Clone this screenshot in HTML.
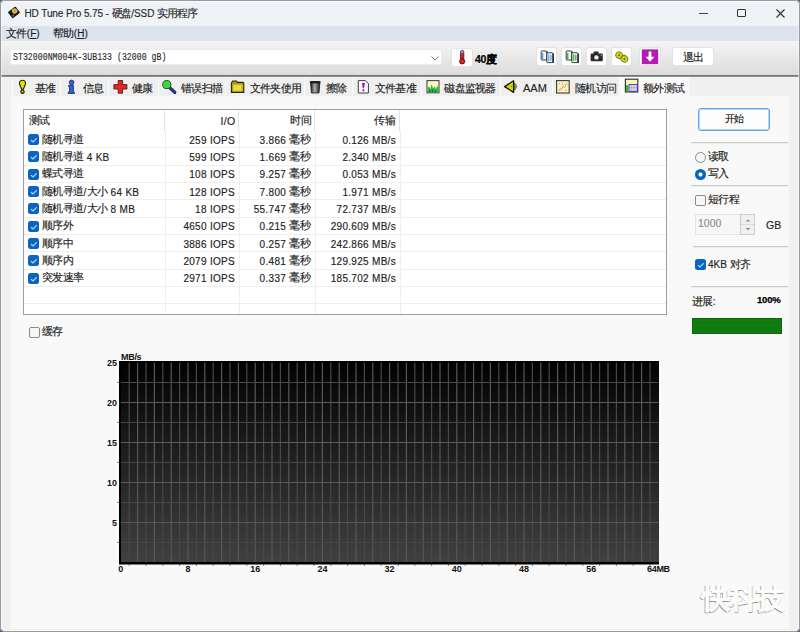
<!DOCTYPE html>
<html><head><meta charset="utf-8">
<style>
*{margin:0;padding:0;box-sizing:border-box}
html,body{width:800px;height:632px;overflow:hidden;background:#5a6270}
body{font-family:"Liberation Sans",sans-serif;font-size:10px;color:#1a1a1a;position:relative;-webkit-text-stroke:0.15px currentColor}
.a{position:absolute;line-height:12px}
.c{font-size:1.05em;letter-spacing:-0.6px}
.nr .c{letter-spacing:-0.8px}
.ttl .c{letter-spacing:-1.1px}
.td .c,.hd .c{line-height:0;position:relative;top:-1px}
svg.a{overflow:visible}
#win{position:absolute;left:0;top:0;width:800px;height:632px;background:#f0f0f0;border-radius:5px;overflow:hidden}
#frame{position:absolute;left:0;top:0;width:800px;height:632px;border:1px solid #9a9a9a;border-radius:5px;pointer-events:none;box-shadow:inset 0 0 0 1px rgba(255,255,255,0.5)}
#title{position:absolute;left:0;top:0;width:800px;height:26px;background:#eff2f6}
#menu{position:absolute;left:0;top:26px;width:800px;height:15.5px;background:#dde4ed}
#tool{position:absolute;left:0;top:41px;width:800px;height:34px;background:linear-gradient(#f4f4f4,#dcdcdc)}
#tline{position:absolute;left:0;top:75px;width:800px;height:2px;background:linear-gradient(#6a6a6a,#9a9a9a)}
.tab{position:absolute;top:78px;height:18px;background:#efefef;border-left:1px solid #fbfbfb}
.tt{position:absolute;top:81.5px;white-space:nowrap;font-size:10px;color:#222}
#page{position:absolute;left:11px;top:96px;width:778px;height:533px;background:#f9f9f9}
.tbtn{position:absolute;height:19px;background:#fff;border:1px solid #e3e3e3;border-radius:3px}
.hd,.td{font-size:10px;color:#222;white-space:nowrap;letter-spacing:0.3px}
.r{text-align:right}
.mono{white-space:nowrap;font-size:10.5px;color:#2a2a2a}
.mono i{font-style:normal;display:inline-block;width:4.94px;text-align:center;overflow:visible}
.cb{width:11px;height:11px;background:#0a64c4;border-radius:2.5px}
.cb svg{position:absolute;left:0.5px;top:0.5px}
.cbx{width:11px;height:11px;border:1px solid #8a8a8a;border-radius:2px;background:#f6f6f6}
.radio{width:11px;height:11px;border:1px solid #8a8a8a;border-radius:50%;background:#f6f6f6}
.radio.on{border:none;background:radial-gradient(circle at 50% 50%,#fff 0,#fff 1.7px,#0067c0 2.4px)}
.lbl{font-size:10px;color:#222;white-space:nowrap}
.sep{height:2px;background:linear-gradient(#cccccc 50%,#ececec 50%)}
.btn{background:#fdfdfd;border:1px solid #5ea6e8;border-radius:3px;box-shadow:inset 0 0 0 1px #b4d6f4}
.btn span{font-size:10px}
.yl{font-size:9px;font-weight:bold;text-align:right;color:#111;-webkit-text-stroke:0}
.xl{font-size:9px;font-weight:bold;color:#111;white-space:nowrap;-webkit-text-stroke:0}
</style></head><body>
<div id="win">
<div id="title">
<div class="a ttl" style="left:24.5px;top:7px;font-size:10px;letter-spacing:-0.1px;color:#2a2a2a;white-space:nowrap">HD Tune Pro 5.75 - <span class="c">硬盘</span>/SSD <span class="c">实用程序</span></div>
<div class="a" style="left:699px;top:13px;width:9px;height:1px;background:#444"></div>
<div class="a" style="left:737px;top:9px;width:9px;height:8px;border:1px solid #333;border-radius:1px"></div>
<svg class="a" style="left:776px;top:9px" width="9" height="9" viewBox="0 0 9 9"><path d="M0.5 0.5L8.5 8.5M8.5 0.5L0.5 8.5" stroke="#333" stroke-width="1.2"/></svg>
</div>
<div id="menu">
<div class="a" style="left:6px;top:1px;font-size:10px;white-space:nowrap"><span class="c">文件</span>(<u>F</u>)</div>
<div class="a" style="left:53px;top:1px;font-size:10px;white-space:nowrap"><span class="c">帮助</span>(<u>H</u>)</div>
</div>
<div id="tool"></div>
<div class="a" style="left:10px;top:49px;width:432px;height:16px;background:#fff;border:1px solid #ececec;border-radius:2px">
  <div class="a" style="left:2px;top:1px;font-family:'Liberation Mono',monospace;font-size:11px;color:#2a2a2a;white-space:nowrap;transform:scaleX(0.75);transform-origin:0 0">ST32000NM004K-3UB133 (32000 gB)</div>
  <svg class="a" style="left:420px;top:6px" width="8" height="5" viewBox="0 0 8 5"><path d="M0.5 0.5L4 4L7.5 0.5" stroke="#777" fill="none"/></svg>
</div>
<div class="tbtn" style="left:451px;top:48px;width:22px;height:19px"></div>
<div class="a" style="left:475px;top:52.5px;font-size:10.5px;font-weight:bold;color:#000;white-space:nowrap;letter-spacing:-0.3px;-webkit-text-stroke:0.2px #000">40<span class="c">度</span></div>
<div class="tbtn" style="left:536px;top:47px;width:21px;height:19px"></div>
<div class="tbtn" style="left:561px;top:47px;width:21px;height:19px"></div>
<div class="tbtn" style="left:586px;top:47px;width:21px;height:19px"></div>
<div class="tbtn" style="left:611px;top:47px;width:21px;height:19px"></div>
<div class="tbtn" style="left:639px;top:47px;width:22px;height:19px"></div>
<div class="tbtn" style="left:672px;top:47px;width:42px;height:19px"><span class="a" style="left:10px;top:3px;font-size:10px"><span class="c">退出</span></span></div>
<div id="tline"></div>
<div class="tab" style="left:12px;width:48px"></div>
<div class="tab" style="left:60px;width:48px"></div>
<div class="tab" style="left:108px;width:50px"></div>
<div class="tab" style="left:158px;width:67px"></div>
<div class="tab" style="left:225px;width:79px"></div>
<div class="tab" style="left:304px;width:48px"></div>
<div class="tab" style="left:352px;width:69px"></div>
<div class="tab" style="left:421px;width:79px"></div>
<div class="tab" style="left:500px;width:52px"></div>
<div class="tab" style="left:552px;width:67px"></div>
<div id="page"></div>
<div class="tab" style="left:619px;top:77px;width:70px;height:19px;background:#f9f9f9;border-left:none"></div>
<div class="tt" style="left:34.5px"><span class="c">基准</span></div>
<div class="tt" style="left:82.5px"><span class="c">信息</span></div>
<div class="tt" style="left:132px"><span class="c">健康</span></div>
<div class="tt" style="left:181px"><span class="c">错误扫描</span></div>
<div class="tt nr" style="left:250px"><span class="c">文件夹使用</span></div>
<div class="tt" style="left:326px"><span class="c">擦除</span></div>
<div class="tt" style="left:374.6px"><span class="c">文件基准</span></div>
<div class="tt nr" style="left:444.4px"><span class="c">磁盘监视器</span></div>
<div class="tt" style="left:523px"><span style="font-size:11px">AAM</span></div>
<div class="tt" style="left:575px"><span class="c">随机访问</span></div>
<div class="tt" style="left:643px"><span class="c">额外测试</span></div>
<div class="a" style="left:23px;top:109px;width:644px;height:206px;background:#fff;border:1px solid #9a9fa8"></div>
<div class="a" style="left:164px;top:110px;width:1px;height:21px;background:#e2e2e2"></div>
<div class="a" style="left:165px;top:131px;width:1px;height:183px;background:#eeeeee"></div>
<div class="a" style="left:238px;top:110px;width:1px;height:21px;background:#e2e2e2"></div>
<div class="a" style="left:239px;top:131px;width:1px;height:183px;background:#eeeeee"></div>
<div class="a" style="left:314px;top:110px;width:1px;height:21px;background:#e2e2e2"></div>
<div class="a" style="left:315px;top:131px;width:1px;height:183px;background:#eeeeee"></div>
<div class="a" style="left:399px;top:110px;width:1px;height:21px;background:#e2e2e2"></div>
<div class="a" style="left:400px;top:131px;width:1px;height:183px;background:#eeeeee"></div>
<div class="a" style="left:24px;top:147px;width:642px;height:1px;background:#efefef"></div>
<div class="a" style="left:24px;top:165px;width:642px;height:1px;background:#efefef"></div>
<div class="a" style="left:24px;top:182px;width:642px;height:1px;background:#efefef"></div>
<div class="a" style="left:24px;top:199px;width:642px;height:1px;background:#efefef"></div>
<div class="a" style="left:24px;top:217px;width:642px;height:1px;background:#efefef"></div>
<div class="a" style="left:24px;top:234px;width:642px;height:1px;background:#efefef"></div>
<div class="a" style="left:24px;top:251px;width:642px;height:1px;background:#efefef"></div>
<div class="a" style="left:24px;top:269px;width:642px;height:1px;background:#efefef"></div>
<div class="a" style="left:24px;top:286px;width:642px;height:1px;background:#efefef"></div>
<div class="a" style="left:24px;top:303px;width:642px;height:1px;background:#efefef"></div>
<div class="a hd" style="left:29px;top:116px"><span class="c">测试</span></div>
<div class="a hd r" style="left:166.5px;top:115px;width:69px;font-size:10.5px">I/O</div>
<div class="a hd r" style="left:241px;top:116px;width:70px"><span class="c">时间</span></div>
<div class="a hd r" style="left:316px;top:116px;width:79px"><span class="c">传输</span></div>
<div class="a cb" style="left:28px;top:134px"><svg width="10" height="10" viewBox="0 0 10 10"><path d="M2.4 5.5L4 6.9L7.4 3.6" stroke="#b8d4f4" stroke-width="1.2" fill="none" stroke-linecap="round"/></svg></div>
<div class="a td" style="left:42px;top:134.50px"><span class="c">随机寻道</span></div>
<div class="a td r" style="left:166px;top:134.50px;width:69px">259 IOPS</div>
<div class="a td r" style="left:240px;top:134.50px;width:70px">3.866 <span class="c">毫秒</span></div>
<div class="a td r" style="left:317px;top:134.50px;width:79px">0.126 MB/s</div>
<div class="a cb" style="left:28px;top:151px"><svg width="10" height="10" viewBox="0 0 10 10"><path d="M2.4 5.5L4 6.9L7.4 3.6" stroke="#b8d4f4" stroke-width="1.2" fill="none" stroke-linecap="round"/></svg></div>
<div class="a td" style="left:42px;top:151.85px"><span class="c">随机寻道</span> 4 KB</div>
<div class="a td r" style="left:166px;top:151.85px;width:69px">599 IOPS</div>
<div class="a td r" style="left:240px;top:151.85px;width:70px">1.669 <span class="c">毫秒</span></div>
<div class="a td r" style="left:317px;top:151.85px;width:79px">2.340 MB/s</div>
<div class="a cb" style="left:28px;top:169px"><svg width="10" height="10" viewBox="0 0 10 10"><path d="M2.4 5.5L4 6.9L7.4 3.6" stroke="#b8d4f4" stroke-width="1.2" fill="none" stroke-linecap="round"/></svg></div>
<div class="a td" style="left:42px;top:169.20px"><span class="c">蝶式寻道</span></div>
<div class="a td r" style="left:166px;top:169.20px;width:69px">108 IOPS</div>
<div class="a td r" style="left:240px;top:169.20px;width:70px">9.257 <span class="c">毫秒</span></div>
<div class="a td r" style="left:317px;top:169.20px;width:79px">0.053 MB/s</div>
<div class="a cb" style="left:28px;top:186px"><svg width="10" height="10" viewBox="0 0 10 10"><path d="M2.4 5.5L4 6.9L7.4 3.6" stroke="#b8d4f4" stroke-width="1.2" fill="none" stroke-linecap="round"/></svg></div>
<div class="a td" style="left:42px;top:186.55px"><span class="c">随机寻道</span>/<span class="c">大小</span> 64 KB</div>
<div class="a td r" style="left:166px;top:186.55px;width:69px">128 IOPS</div>
<div class="a td r" style="left:240px;top:186.55px;width:70px">7.800 <span class="c">毫秒</span></div>
<div class="a td r" style="left:317px;top:186.55px;width:79px">1.971 MB/s</div>
<div class="a cb" style="left:28px;top:203px"><svg width="10" height="10" viewBox="0 0 10 10"><path d="M2.4 5.5L4 6.9L7.4 3.6" stroke="#b8d4f4" stroke-width="1.2" fill="none" stroke-linecap="round"/></svg></div>
<div class="a td" style="left:42px;top:203.90px"><span class="c">随机寻道</span>/<span class="c">大小</span> 8 MB</div>
<div class="a td r" style="left:166px;top:203.90px;width:69px">18 IOPS</div>
<div class="a td r" style="left:240px;top:203.90px;width:70px">55.747 <span class="c">毫秒</span></div>
<div class="a td r" style="left:317px;top:203.90px;width:79px">72.737 MB/s</div>
<div class="a cb" style="left:28px;top:221px"><svg width="10" height="10" viewBox="0 0 10 10"><path d="M2.4 5.5L4 6.9L7.4 3.6" stroke="#b8d4f4" stroke-width="1.2" fill="none" stroke-linecap="round"/></svg></div>
<div class="a td" style="left:42px;top:221.25px"><span class="c">顺序外</span></div>
<div class="a td r" style="left:166px;top:221.25px;width:69px">4650 IOPS</div>
<div class="a td r" style="left:240px;top:221.25px;width:70px">0.215 <span class="c">毫秒</span></div>
<div class="a td r" style="left:317px;top:221.25px;width:79px">290.609 MB/s</div>
<div class="a cb" style="left:28px;top:238px"><svg width="10" height="10" viewBox="0 0 10 10"><path d="M2.4 5.5L4 6.9L7.4 3.6" stroke="#b8d4f4" stroke-width="1.2" fill="none" stroke-linecap="round"/></svg></div>
<div class="a td" style="left:42px;top:238.60px"><span class="c">顺序中</span></div>
<div class="a td r" style="left:166px;top:238.60px;width:69px">3886 IOPS</div>
<div class="a td r" style="left:240px;top:238.60px;width:70px">0.257 <span class="c">毫秒</span></div>
<div class="a td r" style="left:317px;top:238.60px;width:79px">242.866 MB/s</div>
<div class="a cb" style="left:28px;top:255px"><svg width="10" height="10" viewBox="0 0 10 10"><path d="M2.4 5.5L4 6.9L7.4 3.6" stroke="#b8d4f4" stroke-width="1.2" fill="none" stroke-linecap="round"/></svg></div>
<div class="a td" style="left:42px;top:255.95px"><span class="c">顺序内</span></div>
<div class="a td r" style="left:166px;top:255.95px;width:69px">2079 IOPS</div>
<div class="a td r" style="left:240px;top:255.95px;width:70px">0.481 <span class="c">毫秒</span></div>
<div class="a td r" style="left:317px;top:255.95px;width:79px">129.925 MB/s</div>
<div class="a cb" style="left:28px;top:273px"><svg width="10" height="10" viewBox="0 0 10 10"><path d="M2.4 5.5L4 6.9L7.4 3.6" stroke="#b8d4f4" stroke-width="1.2" fill="none" stroke-linecap="round"/></svg></div>
<div class="a td" style="left:42px;top:273.30px"><span class="c">突发速率</span></div>
<div class="a td r" style="left:166px;top:273.30px;width:69px">2971 IOPS</div>
<div class="a td r" style="left:240px;top:273.30px;width:70px">0.337 <span class="c">毫秒</span></div>
<div class="a td r" style="left:317px;top:273.30px;width:79px">185.702 MB/s</div>
<div class="a" style="left:119px;top:361px;width:540px;height:203px;background:linear-gradient(#000 0px,#020202 2px,#404040 201px,#000 201px)"></div>
<svg class="a" style="left:0;top:0" width="800" height="632" viewBox="0 0 800 632">
<line x1="129.20" y1="362" x2="129.20" y2="562" stroke="#484848" stroke-width="1.2"/>
<line x1="129.20" y1="564" x2="129.20" y2="566" stroke="#8a8a8a" stroke-width="1"/>
<line x1="137.60" y1="362" x2="137.60" y2="562" stroke="#585858" stroke-width="1.2"/>
<line x1="146.00" y1="362" x2="146.00" y2="562" stroke="#484848" stroke-width="1.2"/>
<line x1="146.00" y1="564" x2="146.00" y2="566" stroke="#8a8a8a" stroke-width="1"/>
<line x1="154.40" y1="362" x2="154.40" y2="562" stroke="#585858" stroke-width="1.2"/>
<line x1="162.80" y1="362" x2="162.80" y2="562" stroke="#484848" stroke-width="1.2"/>
<line x1="162.80" y1="564" x2="162.80" y2="566" stroke="#8a8a8a" stroke-width="1"/>
<line x1="171.20" y1="362" x2="171.20" y2="562" stroke="#585858" stroke-width="1.2"/>
<line x1="179.60" y1="362" x2="179.60" y2="562" stroke="#484848" stroke-width="1.2"/>
<line x1="179.60" y1="564" x2="179.60" y2="566" stroke="#8a8a8a" stroke-width="1"/>
<line x1="188.00" y1="362" x2="188.00" y2="562" stroke="#585858" stroke-width="1.2"/>
<line x1="196.40" y1="362" x2="196.40" y2="562" stroke="#484848" stroke-width="1.2"/>
<line x1="196.40" y1="564" x2="196.40" y2="566" stroke="#8a8a8a" stroke-width="1"/>
<line x1="204.80" y1="362" x2="204.80" y2="562" stroke="#585858" stroke-width="1.2"/>
<line x1="213.20" y1="362" x2="213.20" y2="562" stroke="#484848" stroke-width="1.2"/>
<line x1="213.20" y1="564" x2="213.20" y2="566" stroke="#8a8a8a" stroke-width="1"/>
<line x1="221.60" y1="362" x2="221.60" y2="562" stroke="#585858" stroke-width="1.2"/>
<line x1="230.00" y1="362" x2="230.00" y2="562" stroke="#484848" stroke-width="1.2"/>
<line x1="230.00" y1="564" x2="230.00" y2="566" stroke="#8a8a8a" stroke-width="1"/>
<line x1="238.40" y1="362" x2="238.40" y2="562" stroke="#585858" stroke-width="1.2"/>
<line x1="246.80" y1="362" x2="246.80" y2="562" stroke="#484848" stroke-width="1.2"/>
<line x1="246.80" y1="564" x2="246.80" y2="566" stroke="#8a8a8a" stroke-width="1"/>
<line x1="255.20" y1="362" x2="255.20" y2="562" stroke="#585858" stroke-width="1.2"/>
<line x1="263.60" y1="362" x2="263.60" y2="562" stroke="#484848" stroke-width="1.2"/>
<line x1="263.60" y1="564" x2="263.60" y2="566" stroke="#8a8a8a" stroke-width="1"/>
<line x1="272.00" y1="362" x2="272.00" y2="562" stroke="#585858" stroke-width="1.2"/>
<line x1="280.40" y1="362" x2="280.40" y2="562" stroke="#484848" stroke-width="1.2"/>
<line x1="280.40" y1="564" x2="280.40" y2="566" stroke="#8a8a8a" stroke-width="1"/>
<line x1="288.80" y1="362" x2="288.80" y2="562" stroke="#585858" stroke-width="1.2"/>
<line x1="297.20" y1="362" x2="297.20" y2="562" stroke="#484848" stroke-width="1.2"/>
<line x1="297.20" y1="564" x2="297.20" y2="566" stroke="#8a8a8a" stroke-width="1"/>
<line x1="305.60" y1="362" x2="305.60" y2="562" stroke="#585858" stroke-width="1.2"/>
<line x1="314.00" y1="362" x2="314.00" y2="562" stroke="#484848" stroke-width="1.2"/>
<line x1="314.00" y1="564" x2="314.00" y2="566" stroke="#8a8a8a" stroke-width="1"/>
<line x1="322.40" y1="362" x2="322.40" y2="562" stroke="#585858" stroke-width="1.2"/>
<line x1="330.80" y1="362" x2="330.80" y2="562" stroke="#484848" stroke-width="1.2"/>
<line x1="330.80" y1="564" x2="330.80" y2="566" stroke="#8a8a8a" stroke-width="1"/>
<line x1="339.20" y1="362" x2="339.20" y2="562" stroke="#585858" stroke-width="1.2"/>
<line x1="347.60" y1="362" x2="347.60" y2="562" stroke="#484848" stroke-width="1.2"/>
<line x1="347.60" y1="564" x2="347.60" y2="566" stroke="#8a8a8a" stroke-width="1"/>
<line x1="356.00" y1="362" x2="356.00" y2="562" stroke="#585858" stroke-width="1.2"/>
<line x1="364.40" y1="362" x2="364.40" y2="562" stroke="#484848" stroke-width="1.2"/>
<line x1="364.40" y1="564" x2="364.40" y2="566" stroke="#8a8a8a" stroke-width="1"/>
<line x1="372.80" y1="362" x2="372.80" y2="562" stroke="#585858" stroke-width="1.2"/>
<line x1="381.20" y1="362" x2="381.20" y2="562" stroke="#484848" stroke-width="1.2"/>
<line x1="381.20" y1="564" x2="381.20" y2="566" stroke="#8a8a8a" stroke-width="1"/>
<line x1="389.60" y1="362" x2="389.60" y2="562" stroke="#585858" stroke-width="1.2"/>
<line x1="398.00" y1="362" x2="398.00" y2="562" stroke="#484848" stroke-width="1.2"/>
<line x1="398.00" y1="564" x2="398.00" y2="566" stroke="#8a8a8a" stroke-width="1"/>
<line x1="406.40" y1="362" x2="406.40" y2="562" stroke="#585858" stroke-width="1.2"/>
<line x1="414.80" y1="362" x2="414.80" y2="562" stroke="#484848" stroke-width="1.2"/>
<line x1="414.80" y1="564" x2="414.80" y2="566" stroke="#8a8a8a" stroke-width="1"/>
<line x1="423.20" y1="362" x2="423.20" y2="562" stroke="#585858" stroke-width="1.2"/>
<line x1="431.60" y1="362" x2="431.60" y2="562" stroke="#484848" stroke-width="1.2"/>
<line x1="431.60" y1="564" x2="431.60" y2="566" stroke="#8a8a8a" stroke-width="1"/>
<line x1="440.00" y1="362" x2="440.00" y2="562" stroke="#585858" stroke-width="1.2"/>
<line x1="448.40" y1="362" x2="448.40" y2="562" stroke="#484848" stroke-width="1.2"/>
<line x1="448.40" y1="564" x2="448.40" y2="566" stroke="#8a8a8a" stroke-width="1"/>
<line x1="456.80" y1="362" x2="456.80" y2="562" stroke="#585858" stroke-width="1.2"/>
<line x1="465.20" y1="362" x2="465.20" y2="562" stroke="#484848" stroke-width="1.2"/>
<line x1="465.20" y1="564" x2="465.20" y2="566" stroke="#8a8a8a" stroke-width="1"/>
<line x1="473.60" y1="362" x2="473.60" y2="562" stroke="#585858" stroke-width="1.2"/>
<line x1="482.00" y1="362" x2="482.00" y2="562" stroke="#484848" stroke-width="1.2"/>
<line x1="482.00" y1="564" x2="482.00" y2="566" stroke="#8a8a8a" stroke-width="1"/>
<line x1="490.40" y1="362" x2="490.40" y2="562" stroke="#585858" stroke-width="1.2"/>
<line x1="498.80" y1="362" x2="498.80" y2="562" stroke="#484848" stroke-width="1.2"/>
<line x1="498.80" y1="564" x2="498.80" y2="566" stroke="#8a8a8a" stroke-width="1"/>
<line x1="507.20" y1="362" x2="507.20" y2="562" stroke="#585858" stroke-width="1.2"/>
<line x1="515.60" y1="362" x2="515.60" y2="562" stroke="#484848" stroke-width="1.2"/>
<line x1="515.60" y1="564" x2="515.60" y2="566" stroke="#8a8a8a" stroke-width="1"/>
<line x1="524.00" y1="362" x2="524.00" y2="562" stroke="#585858" stroke-width="1.2"/>
<line x1="532.40" y1="362" x2="532.40" y2="562" stroke="#484848" stroke-width="1.2"/>
<line x1="532.40" y1="564" x2="532.40" y2="566" stroke="#8a8a8a" stroke-width="1"/>
<line x1="540.80" y1="362" x2="540.80" y2="562" stroke="#585858" stroke-width="1.2"/>
<line x1="549.20" y1="362" x2="549.20" y2="562" stroke="#484848" stroke-width="1.2"/>
<line x1="549.20" y1="564" x2="549.20" y2="566" stroke="#8a8a8a" stroke-width="1"/>
<line x1="557.60" y1="362" x2="557.60" y2="562" stroke="#585858" stroke-width="1.2"/>
<line x1="566.00" y1="362" x2="566.00" y2="562" stroke="#484848" stroke-width="1.2"/>
<line x1="566.00" y1="564" x2="566.00" y2="566" stroke="#8a8a8a" stroke-width="1"/>
<line x1="574.40" y1="362" x2="574.40" y2="562" stroke="#585858" stroke-width="1.2"/>
<line x1="582.80" y1="362" x2="582.80" y2="562" stroke="#484848" stroke-width="1.2"/>
<line x1="582.80" y1="564" x2="582.80" y2="566" stroke="#8a8a8a" stroke-width="1"/>
<line x1="591.20" y1="362" x2="591.20" y2="562" stroke="#585858" stroke-width="1.2"/>
<line x1="599.60" y1="362" x2="599.60" y2="562" stroke="#484848" stroke-width="1.2"/>
<line x1="599.60" y1="564" x2="599.60" y2="566" stroke="#8a8a8a" stroke-width="1"/>
<line x1="608.00" y1="362" x2="608.00" y2="562" stroke="#585858" stroke-width="1.2"/>
<line x1="616.40" y1="362" x2="616.40" y2="562" stroke="#484848" stroke-width="1.2"/>
<line x1="616.40" y1="564" x2="616.40" y2="566" stroke="#8a8a8a" stroke-width="1"/>
<line x1="624.80" y1="362" x2="624.80" y2="562" stroke="#585858" stroke-width="1.2"/>
<line x1="633.20" y1="362" x2="633.20" y2="562" stroke="#484848" stroke-width="1.2"/>
<line x1="633.20" y1="564" x2="633.20" y2="566" stroke="#8a8a8a" stroke-width="1"/>
<line x1="641.60" y1="362" x2="641.60" y2="562" stroke="#585858" stroke-width="1.2"/>
<line x1="650.00" y1="362" x2="650.00" y2="562" stroke="#484848" stroke-width="1.2"/>
<line x1="650.00" y1="564" x2="650.00" y2="566" stroke="#8a8a8a" stroke-width="1"/>
<line x1="121" y1="382.50" x2="658.5" y2="382.50" stroke="#464646" stroke-width="1.2"/>
<line x1="117" y1="382.50" x2="119" y2="382.50" stroke="#8a8a8a" stroke-width="1"/>
<line x1="121" y1="402.50" x2="658.5" y2="402.50" stroke="#5a5a5a" stroke-width="1.2"/>
<line x1="121" y1="422.50" x2="658.5" y2="422.50" stroke="#464646" stroke-width="1.2"/>
<line x1="117" y1="422.50" x2="119" y2="422.50" stroke="#8a8a8a" stroke-width="1"/>
<line x1="121" y1="442.50" x2="658.5" y2="442.50" stroke="#5a5a5a" stroke-width="1.2"/>
<line x1="121" y1="462.50" x2="658.5" y2="462.50" stroke="#464646" stroke-width="1.2"/>
<line x1="117" y1="462.50" x2="119" y2="462.50" stroke="#8a8a8a" stroke-width="1"/>
<line x1="121" y1="482.50" x2="658.5" y2="482.50" stroke="#5a5a5a" stroke-width="1.2"/>
<line x1="121" y1="502.50" x2="658.5" y2="502.50" stroke="#464646" stroke-width="1.2"/>
<line x1="117" y1="502.50" x2="119" y2="502.50" stroke="#8a8a8a" stroke-width="1"/>
<line x1="121" y1="522.50" x2="658.5" y2="522.50" stroke="#5a5a5a" stroke-width="1.2"/>
<line x1="121" y1="542.50" x2="658.5" y2="542.50" stroke="#464646" stroke-width="1.2"/>
<line x1="117" y1="542.50" x2="119" y2="542.50" stroke="#8a8a8a" stroke-width="1"/>
<rect x="119" y="361" width="540" height="1.6" fill="#000"/>
<rect x="119" y="361" width="2" height="203" fill="#000"/>
<rect x="119" y="563" width="540" height="1.5" fill="#000"/>
</svg>
<div class="a yl" style="left:80px;top:356.5px;width:37px">25</div>
<div class="a yl" style="left:80px;top:396.5px;width:37px">20</div>
<div class="a yl" style="left:80px;top:436.5px;width:37px">15</div>
<div class="a yl" style="left:80px;top:476.5px;width:37px">10</div>
<div class="a yl" style="left:80px;top:516.5px;width:37px">5</div>
<div class="a xl" style="left:121px;top:351px;letter-spacing:-0.3px">MB/s</div>
<div class="a xl" style="left:105.8px;top:563px;width:30px;text-align:center">0</div>
<div class="a xl" style="left:173.0px;top:563px;width:30px;text-align:center">8</div>
<div class="a xl" style="left:240.2px;top:563px;width:30px;text-align:center">16</div>
<div class="a xl" style="left:307.4px;top:563px;width:30px;text-align:center">24</div>
<div class="a xl" style="left:374.6px;top:563px;width:30px;text-align:center">32</div>
<div class="a xl" style="left:441.8px;top:563px;width:30px;text-align:center">40</div>
<div class="a xl" style="left:509.0px;top:563px;width:30px;text-align:center">48</div>
<div class="a xl" style="left:576.2px;top:563px;width:30px;text-align:center">56</div>
<div class="a xl" style="left:643.4px;top:563px;width:30px;text-align:center;letter-spacing:-0.3px">64MB</div>

<div class="a btn" style="left:698px;top:108px;width:72px;height:23px"><span class="a" style="left:0;top:3.5px;width:70px;text-align:center;color:#111"><span class="c">开始</span></span></div>
<div class="a sep" style="left:691px;top:142px;width:97px"></div>
<div class="a radio" style="left:695px;top:152px"></div><div class="a lbl" style="left:708px;top:150px"><span class="c">读取</span></div>
<div class="a radio on" style="left:695px;top:169px"></div><div class="a lbl" style="left:708px;top:167px"><span class="c">写入</span></div>
<div class="a sep" style="left:691px;top:185px;width:97px"></div>
<div class="a cbx" style="left:695px;top:195px"></div><div class="a lbl" style="left:708px;top:193px"><span class="c">短行程</span></div>
<div class="a" style="left:695px;top:214px;width:60px;height:21px;border:1px solid #e4e4e4;background:#f7f7f7"></div>
<div class="a" style="left:698px;top:217px;color:#8e8e8e;font-size:10.5px">1000</div>
<div class="a" style="left:740px;top:214px;width:15px;height:21px;border:1px solid #cdcdcd;background:#f0f0f0"></div>
<div class="a" style="left:741px;top:224px;width:13px;height:1px;background:#dcdcdc"></div>
<svg class="a" style="left:745px;top:219px" width="6" height="12" viewBox="0 0 6 12"><path d="M0.5 2.6L3 0.4L5.5 2.6Z" fill="#8a8a8a"/><path d="M0.5 9L3 11.2L5.5 9Z" fill="#8a8a8a"/></svg>
<div class="a lbl" style="left:766px;top:219px;font-size:10.5px">GB</div>
<div class="a sep" style="left:693px;top:246px;width:95px"></div>
<div class="a cb" style="left:695px;top:259px"><svg width="10" height="10" viewBox="0 0 10 10"><path d="M2.4 5.5L4 6.9L7.4 3.6" stroke="#b8d4f4" stroke-width="1.2" fill="none" stroke-linecap="round"/></svg></div><div class="a lbl" style="left:708px;top:258px">4KB <span class="c">对齐</span></div>
<div class="a sep" style="left:691px;top:286px;width:97px"></div>
<div class="a lbl" style="left:692px;top:295px"><span class="c">进展</span>:</div>
<div class="a lbl" style="left:757px;top:294px;font-weight:bold;font-size:9.5px;color:#000;letter-spacing:-0.2px;-webkit-text-stroke:0.25px #000">100%</div>
<div class="a" style="left:692px;top:318px;width:90px;height:16px;background:#107c10;border:1px solid #0c6a0c"></div>
<div class="a" style="left:694px;top:325px;width:86px;height:0;border-top:1px dotted #1c841c"></div>
<div class="a cbx" style="left:29px;top:327px"></div><div class="a lbl" style="left:42px;top:325px"><span class="c">缓存</span></div>
<div class="a" style="left:702px;top:580px;line-height:normal;font-size:26.67px;color:#fdfdfd;-webkit-text-stroke:0.4px #fcfcfc;text-shadow:-0.8px 1px 0.5px #8c8c8c,0.5px 0.5px 0.8px #b8b8b8;font-weight:bold;white-space:nowrap"><span class="c">快科技</span></div>


<svg class="a" style="left:0;top:0" width="800" height="632" viewBox="0 0 800 632">
<!-- title icon -->
<g transform="translate(14,12.4) rotate(-38)">
  <rect x="-4.8" y="-3.9" width="9.6" height="7.8" rx="0.8" fill="#161616"/>
  <circle cx="1.4" cy="-0.7" r="2.7" fill="#e6b43c"/>
  <circle cx="1.4" cy="-0.7" r="0.9" fill="#9090a8"/>
  <circle cx="-2.6" cy="2" r="1.1" fill="#6a6a6a"/>
</g>
<!-- tab1 ! -->
<path d="M22.5 80.3 C25.6 80.3 25.9 83 25.3 84.6 L23.3 89.2 L21.7 89.2 L19.7 84.6 C19.1 83 19.4 80.3 22.5 80.3Z" fill="#e2e000" stroke="#1a1a08" stroke-width="1.1"/>
<circle cx="22.5" cy="91.7" r="1.7" fill="#c8c000" stroke="#1a1a08" stroke-width="1.1"/>
<!-- tab2 i -->
<circle cx="71.6" cy="82.4" r="2.3" fill="#2a6ae0" stroke="#1a2a60" stroke-width="0.8"/>
<path d="M68.6 85.4 L73.4 85.4 L73.4 91.6 L74.4 92.2 L74.4 93.4 L68.2 93.4 L68.2 92.2 L69.6 91.6 L69.6 87 L68.6 86.6Z" fill="#2a6ae0" stroke="#101850" stroke-width="0.8"/>
<!-- tab3 red cross -->
<path d="M118.2 80.5 L122.6 80.5 L122.6 84.6 L126.9 84.6 L126.9 89 L122.6 89 L122.6 93.2 L118.2 93.2 L118.2 89 L113.9 89 L113.9 84.6 L118.2 84.6Z" fill="#e32626" stroke="#5a1a1a" stroke-width="0.9"/>
<!-- tab4 magnifier -->
<line x1="169.6" y1="87.6" x2="174.8" y2="92.4" stroke="#101040" stroke-width="3.2" stroke-linecap="round"/>
<line x1="169.6" y1="87.6" x2="174.8" y2="92.4" stroke="#2a3ab0" stroke-width="1.8" stroke-linecap="round"/>
<circle cx="166.8" cy="84.6" r="4.1" fill="#3ad83a" stroke="#1a4a1a" stroke-width="0.9"/>
<!-- tab5 folder -->
<path d="M231.4 83 L232.6 81 L236.4 81 L237.6 82.4 L243.2 82.4 L243.8 83.4 L243.8 92.4 L231.4 92.4Z" fill="#a89818" stroke="#2a2408" stroke-width="1.1"/>
<rect x="232.8" y="84.4" width="9.8" height="7" fill="#d8c828"/>
<rect x="234" y="85.4" width="7" height="5" fill="#e8dc50"/>
<!-- tab6 trash -->
<defs><linearGradient id="tg" x1="0" x2="1"><stop offset="0" stop-color="#1a1a1a"/><stop offset="0.45" stop-color="#b0b0b0"/><stop offset="1" stop-color="#1a1a1a"/></linearGradient></defs>
<rect x="309.8" y="81" width="10.8" height="2.4" rx="1" fill="#222"/>
<path d="M310.6 83 L319.8 83 L319 93 L311.4 93Z" fill="url(#tg)" stroke="#1a1a1a" stroke-width="0.8"/>
<!-- tab7 file bench -->
<path d="M358.3 80.6 L365.4 80.6 L368.4 83.6 L368.4 93 L358.3 93Z" fill="#fff" stroke="#3a3a3a" stroke-width="1"/>
<path d="M361.8 83 L365 83 L364 88.2 L362.8 88.2Z" fill="#b010c0"/>
<circle cx="363.4" cy="90.4" r="1.1" fill="#b010c0"/>
<!-- tab8 disk monitor -->
<rect x="427" y="80.6" width="12" height="12.2" fill="#fbf6c8" stroke="#3a3a3a" stroke-width="1"/>
<path d="M427.6 92.2 L427.6 88 L429.2 86.4 L430.4 89 L431.6 84 L433 88.4 L434.6 86.6 L436 89.6 L437 85.6 L438.4 88.6 L438.4 92.2Z" fill="#22c02a"/>
<path d="M429.6 92.2 L429.6 90 M432.4 92.2 L432.4 89.4 M435.4 92.2 L435.4 90.2" stroke="#2040d0" stroke-width="1"/>
<!-- tab9 speaker -->
<path d="M514 82.6 Q519.4 86.6 514 90.6Z" fill="#8a8a8a" stroke="#555" stroke-width="0.6"/>
<path d="M504.6 86.6 L513.6 80.8 L513.6 92.4Z" fill="#e2d400" stroke="#141408" stroke-width="1.3" stroke-linejoin="round"/>
<circle cx="511.4" cy="86.4" r="0.7" fill="#20a040"/><circle cx="510.2" cy="89.6" r="0.7" fill="#20a040"/>
<!-- tab10 random access -->
<rect x="556.6" y="80.6" width="12.6" height="12.4" fill="#fbf0c0" stroke="#3a3a3a" stroke-width="1.1"/>
<path d="M558.6 91 L560 88.6 L561.6 89.6 L563 86 L564.6 87.6 L566.4 83.4 L567.6 84.6" stroke="#c8b060" stroke-width="1" fill="none"/>
<circle cx="559.6" cy="83.6" r="0.6" fill="#6aa0e0"/><circle cx="562.6" cy="84.2" r="0.6" fill="#6aa0e0"/><circle cx="566" cy="90.4" r="0.6" fill="#6aa0e0"/>
<!-- tab11 extra -->
<rect x="625.4" y="79.2" width="12.4" height="12.8" fill="#fff8b0" stroke="#2a2a2a" stroke-width="1.1"/>
<rect x="626" y="85.2" width="2.2" height="6.2" fill="#20c020"/>
<rect x="629" y="84.4" width="8.2" height="7" fill="#e6d6f0" stroke="#2040c0" stroke-width="0.9"/>
<path d="M631.4 85 L631.4 91 M633.8 85 L633.8 91 M629.4 87.6 L637 87.6" stroke="#d080c0" stroke-width="0.6"/>
<!-- thermometer -->
<rect x="460.6" y="50.4" width="3.2" height="10" rx="1.6" fill="#d82020" stroke="#3a1010" stroke-width="0.8"/>
<rect x="461.1" y="50.8" width="2.2" height="2.4" fill="#6ab0f0"/>
<circle cx="462.2" cy="61.4" r="2.6" fill="#e02020" stroke="#3a1010" stroke-width="0.8"/>
<!-- b1 docs blue -->
<g transform="translate(0,0)">
<rect x="541.2" y="51" width="5.6" height="9" rx="0.6" fill="#f4f8fc" stroke="#3a3a3a" stroke-width="1"/>
<path d="M547.2 51.6 L547.2 60.4" stroke="#222" stroke-width="1.2"/>
<path d="M542.6 53 L542.6 59" stroke="#5aa8e8" stroke-width="1.6"/>
<rect x="546.8" y="52.8" width="6" height="9.8" rx="0.6" fill="#f4f8fc" stroke="#3a3a3a" stroke-width="1"/>
<path d="M553.3 53.4 L553.3 63" stroke="#222" stroke-width="1.2"/>
<path d="M548.6 54.6 L548.6 61 M550.8 55 L550.8 60.6" stroke="#6ab0ec" stroke-width="1.5"/>
</g>
<!-- b2 docs green -->
<g transform="translate(25,0)">
<rect x="541.2" y="51" width="5.6" height="9" rx="0.6" fill="#f4f8fc" stroke="#3a3a3a" stroke-width="1"/>
<path d="M547.2 51.6 L547.2 60.4" stroke="#222" stroke-width="1.2"/>
<path d="M542.6 53 L542.6 59" stroke="#30c030" stroke-width="1.6"/>
<rect x="546.8" y="52.8" width="6" height="9.8" rx="0.6" fill="#f4f8fc" stroke="#3a3a3a" stroke-width="1"/>
<path d="M553.3 53.4 L553.3 63" stroke="#222" stroke-width="1.2"/>
<path d="M548.6 54.6 L548.6 61 M550.8 55 L550.8 60.6" stroke="#40c040" stroke-width="1.5"/>
</g>
<!-- b3 camera -->
<rect x="590.6" y="53.6" width="12.2" height="7.6" rx="1.2" fill="#2a2a2a"/>
<rect x="593.6" y="51.6" width="5" height="2.4" rx="0.6" fill="#2a2a2a"/>
<circle cx="596.4" cy="57.4" r="2.2" fill="#f4f4f4"/>
<circle cx="601.4" cy="55.4" r="0.9" fill="#30c030"/>
<!-- b4 gears -->
<g transform="rotate(35 621.8 57)">
<ellipse cx="618.6" cy="57" rx="3.4" ry="3.2" fill="#e2d020" stroke="#5a8a20" stroke-width="1"/>
<ellipse cx="625" cy="57" rx="3.4" ry="3.2" fill="#e2d020" stroke="#5a8a20" stroke-width="1"/>
<circle cx="618.6" cy="57" r="1" fill="#806000"/><circle cx="625" cy="57" r="1" fill="#806000"/>
</g>
<!-- b5 purple -->
<rect x="641.8" y="49.4" width="16.4" height="14.8" fill="#b41ab4"/>
<path d="M648.6 51.6 L651.4 51.6 L651.4 56.8 L654.4 56.8 L650 61.8 L645.6 56.8 L648.6 56.8Z" fill="#fff"/>
</svg>

</div>
<div id="frame"></div>
</body></html>
